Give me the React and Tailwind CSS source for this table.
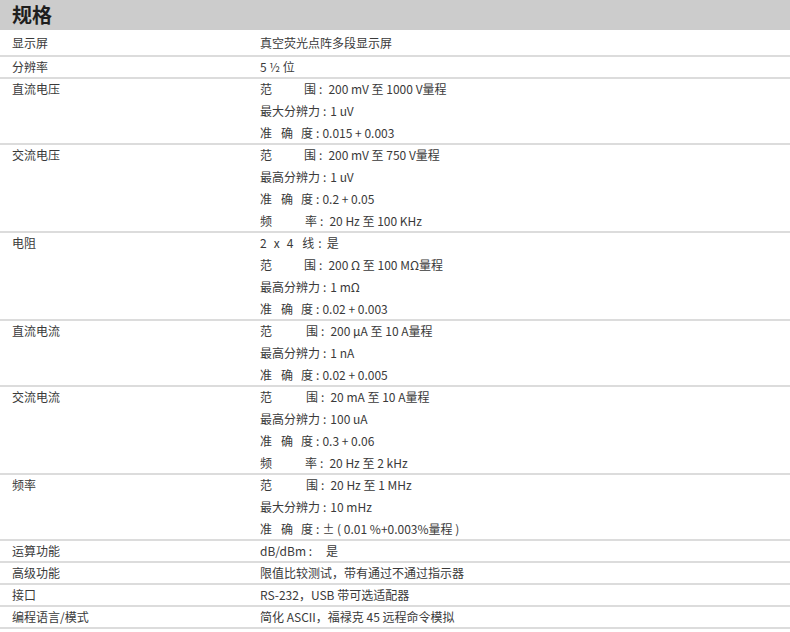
import React from "react";

const H = { 1: "h-[22px]", 3: "h-[66px]", 4: "h-[88px]" };

const Range = ({ v, w = "ml-[32px]" }) => (
  <span className="flex items-center">
    <span>范</span>
    <span className={w}>围</span>
    <span className="ml-[3px]">:</span>
    <span className="ml-[6px]">{v}</span>
  </span>
);
const Res = ({ k, v }) => (
  <span className="flex items-center">
    <span>{k}</span>
    <span className="ml-[3px]">:</span>
    <span className="ml-[4px]">{v}</span>
  </span>
);
const Acc = ({ v }) => (
  <span className="flex items-center">
    <span>准</span>
    <span className="ml-[9px]">确</span>
    <span className="ml-[8px]">度</span>
    <span className="ml-[3px]">:</span>
    <span className="ml-[3px]">{v}</span>
  </span>
);
const Freq = ({ v }) => (
  <span className="flex items-center">
    <span>频</span>
    <span className="ml-[33px]">率</span>
    <span className="ml-[3px]">:</span>
    <span className="ml-[6px]">{v}</span>
  </span>
);

const groups = [
  { label: "显示屏", first: true, lines: ["真空荧光点阵多段显示屏"] },
  { label: "分辨率", lines: ["5 ½ 位"] },
  {
    label: "直流电压",
    lines: [
      <Range v="200 mV 至 1000 V量程" />,
      <Res k="最大分辨力" v="1 uV" />,
      <Acc v="0.015 + 0.003" />,
    ],
  },
  {
    label: "交流电压",
    lines: [
      <Range v="200 mV 至 750 V量程" />,
      <Res k="最高分辨力" v="1 uV" />,
      <Acc v="0.2 + 0.05" />,
      <Freq v="20 Hz 至 100 KHz" />,
    ],
  },
  {
    label: "电阻",
    lines: [
      <span className="flex items-center">
        <span>2</span>
        <span className="ml-[7px]">x</span>
        <span className="ml-[7px]">4</span>
        <span className="ml-[9px]">线</span>
        <span className="ml-[4px]">:</span>
        <span className="ml-[5px]">是</span>
      </span>,
      <Range v="200 Ω 至 100 MΩ量程" />,
      <Res k="最高分辨力" v="1 mΩ" />,
      <Acc v="0.02 + 0.003" />,
    ],
  },
  {
    label: "直流电流",
    lines: [
      <Range v="200 µA 至 10 A量程" w="ml-[34px]" />,
      <Res k="最高分辨力" v="1 nA" />,
      <Acc v="0.02 + 0.005" />,
    ],
  },
  {
    label: "交流电流",
    lines: [
      <Range v="20 mA 至 10 A量程" w="ml-[34px]" />,
      <Res k="最高分辨力" v="100 uA" />,
      <Acc v="0.3 + 0.06" />,
      <Freq v="20 Hz 至 2 kHz" />,
    ],
  },
  {
    label: "频率",
    lines: [
      <Range v="20 Hz 至 1 MHz" w="ml-[34px]" />,
      <Res k="最大分辨力" v="10 mHz" />,
      <Acc v="± ( 0.01 %+0.003%量程 )" />,
    ],
  },
  {
    label: "运算功能",
    lines: [
      <span className="flex items-center">
        <span>dB/dBm :</span>
        <span className="ml-[14px]">是</span>
      </span>,
    ],
  },
  { label: "高级功能", lines: ["限值比较测试，带有通过不通过指示器"] },
  { label: "接口", lines: ["RS-232，USB 带可选适配器"] },
  { label: "编程语言/模式", lines: ["简化 ASCII，福禄克 45 远程命令模拟"] },
];

export default function App() {
  return (
    <div
      className="w-[790px] h-[632px] bg-white overflow-hidden text-[12px] text-[#3a3a3a]"
      style={{ fontFamily: '"Noto Sans CJK SC", "Noto Sans", sans-serif' }}
    >
      <div className="h-[30px] bg-[#cccccc] flex items-center pl-[12px]">
        <span className="text-[20px] font-bold text-[#1e1e1e] leading-none">规格</span>
      </div>
      {groups.map((g, i) => (
        <div
          key={i}
          className={
            "flex border-b-2 border-[#dcdcdc] box-border " +
            (g.first ? "h-[27px] pt-[3px]" : H[g.lines.length])
          }
        >
          <div className="w-[248px] pl-[12px] leading-[22px] -mt-[1px]">{g.label}</div>
          <div className="flex-1 pl-[12px] flex flex-col -mt-[1px]">
            {g.lines.map((l, j) => (
              <div key={j} className="h-[22px] leading-[22px] flex items-center shrink-0">
                {l}
              </div>
            ))}
          </div>
        </div>
      ))}
    </div>
  );
}
